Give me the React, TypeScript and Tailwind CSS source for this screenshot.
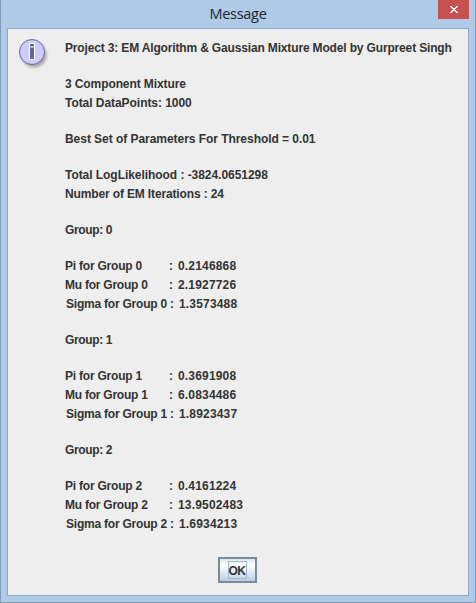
type Line = { text: string; tracking: string; value?: string; indent?: boolean };

const group = (n: number, pi: string, mu: string, sigma: string): (Line | null)[] => [
  null,
  { text: `Group: ${n}`, tracking: "tracking-[-0.37px]" },
  null,
  { text: `Pi for Group ${n}`, tracking: "tracking-[-0.22px]", value: pi },
  { text: `Mu for Group ${n}`, tracking: "tracking-[-0.24px]", value: mu },
  { text: `Sigma for Group ${n}`, tracking: "tracking-[-0.22px]", value: sigma, indent: true },
];

const lines: (Line | null)[] = [
  { text: "Project 3: EM Algorithm & Gaussian Mixture Model by Gurpreet Singh", tracking: "tracking-[-0.155px]" },
  null,
  { text: "3 Component Mixture", tracking: "tracking-[-0.1px]" },
  { text: "Total DataPoints: 1000", tracking: "tracking-[-0.05px]" },
  null,
  { text: "Best Set of Parameters For Threshold = 0.01", tracking: "tracking-[-0.045px]" },
  null,
  { text: "Total LogLikelihood : -3824.0651298", tracking: "tracking-[-0.05px]" },
  { text: "Number of EM Iterations : 24", tracking: "tracking-[-0.14px]" },
  ...group(0, "0.2146868", "2.1927726", "1.3573488"),
  ...group(1, "0.3691908", "6.0834486", "1.8923437"),
  ...group(2, "0.4161224", "13.9502483", "1.6934213"),
];

function InfoIcon() {
  return (
    <svg width="34" height="34" viewBox="0 0 34 34" className="shrink-0">
      <defs>
        <filter id="shadow" x="-30%" y="-30%" width="160%" height="160%">
          <feGaussianBlur stdDeviation="1.5" />
        </filter>
      </defs>
      <circle cx="16" cy="17" r="12.5" fill="#777" opacity="0.6" filter="url(#shadow)" />
      <circle cx="14" cy="14" r="12.5" fill="#ccccff" stroke="#666699" />
      <path d="M11 5h6v17h-6z" fill="#fff" />
      <path d="M12 6h4v2.5h-4zM12 9.5h4v11.5h-4z" fill="#666699" />
    </svg>
  );
}

export default function App() {
  return (
    <div className="flex h-[603px] w-[476px] flex-col border border-t-0 border-[#8298b5] bg-[#b0cbe8] px-1.5 pb-1.5">
      <header className="relative flex h-7 shrink-0 items-center justify-center font-['Open_Sans',sans-serif] text-[14.5px] tracking-[-0.3px] text-[#1e252c]">
        <span>Message</span>
        <button aria-label="Close" className="absolute top-0 right-0 flex h-[19px] w-[31px] items-center justify-center bg-[#c75050]">
          <svg width="8" height="7" viewBox="0 0 8 7" fill="#fff" shapeRendering="crispEdges">
            <path d="M0 0h2v1H0zM6 0h2v1H6zM1 1h2v1H1zM5 1h2v1H5zM2 2h4v1H2zM3 3h2v1H3zM2 4h4v1H2zM1 5h2v1H1zM5 5h2v1H5zM0 6h2v1H0zM6 6h2v1H6z" />
          </svg>
        </button>
      </header>
      <main className="flex flex-1 flex-col border border-[#91a9c8] bg-[#eeeeee] font-['Liberation_Sans',Arial,sans-serif] text-xs font-bold text-[#333333]">
        <div className="flex pt-[9px] pl-2.5">
          <InfoIcon />
          <div className="ml-[13px] pt-px">
            {lines.map((line, i) =>
              line ? (
                <div key={i} className="flex h-[19px] items-center leading-[19px] whitespace-pre">
                  {line.value ? (
                    <>
                      <span className={line.indent ? "w-[105px] pl-px" : "w-[104px]"}>
                        <span className={line.tracking}>{line.text}</span>
                      </span>
                      <span className="w-[9px]">:</span>
                      <span className="tracking-[0.17px]">{line.value}</span>
                    </>
                  ) : (
                    <span className={line.tracking}>{line.text}</span>
                  )}
                </div>
              ) : (
                <div key={i} className="h-[17px]" />
              ),
            )}
          </div>
        </div>
        <div className="mt-auto flex justify-center pr-0.5 pb-3">
          <button className="flex h-[26px] w-[39px] items-center justify-center border-2 border-[#7a8a99] bg-linear-to-b from-[#dde8f3] via-white via-30% to-[#b8cfe5]">
            <span className="flex h-[18px] w-[19px] items-center justify-center border border-[#a3b8cc] pt-0.5 tracking-[-0.5px]">OK</span>
          </button>
        </div>
      </main>
    </div>
  );
}
